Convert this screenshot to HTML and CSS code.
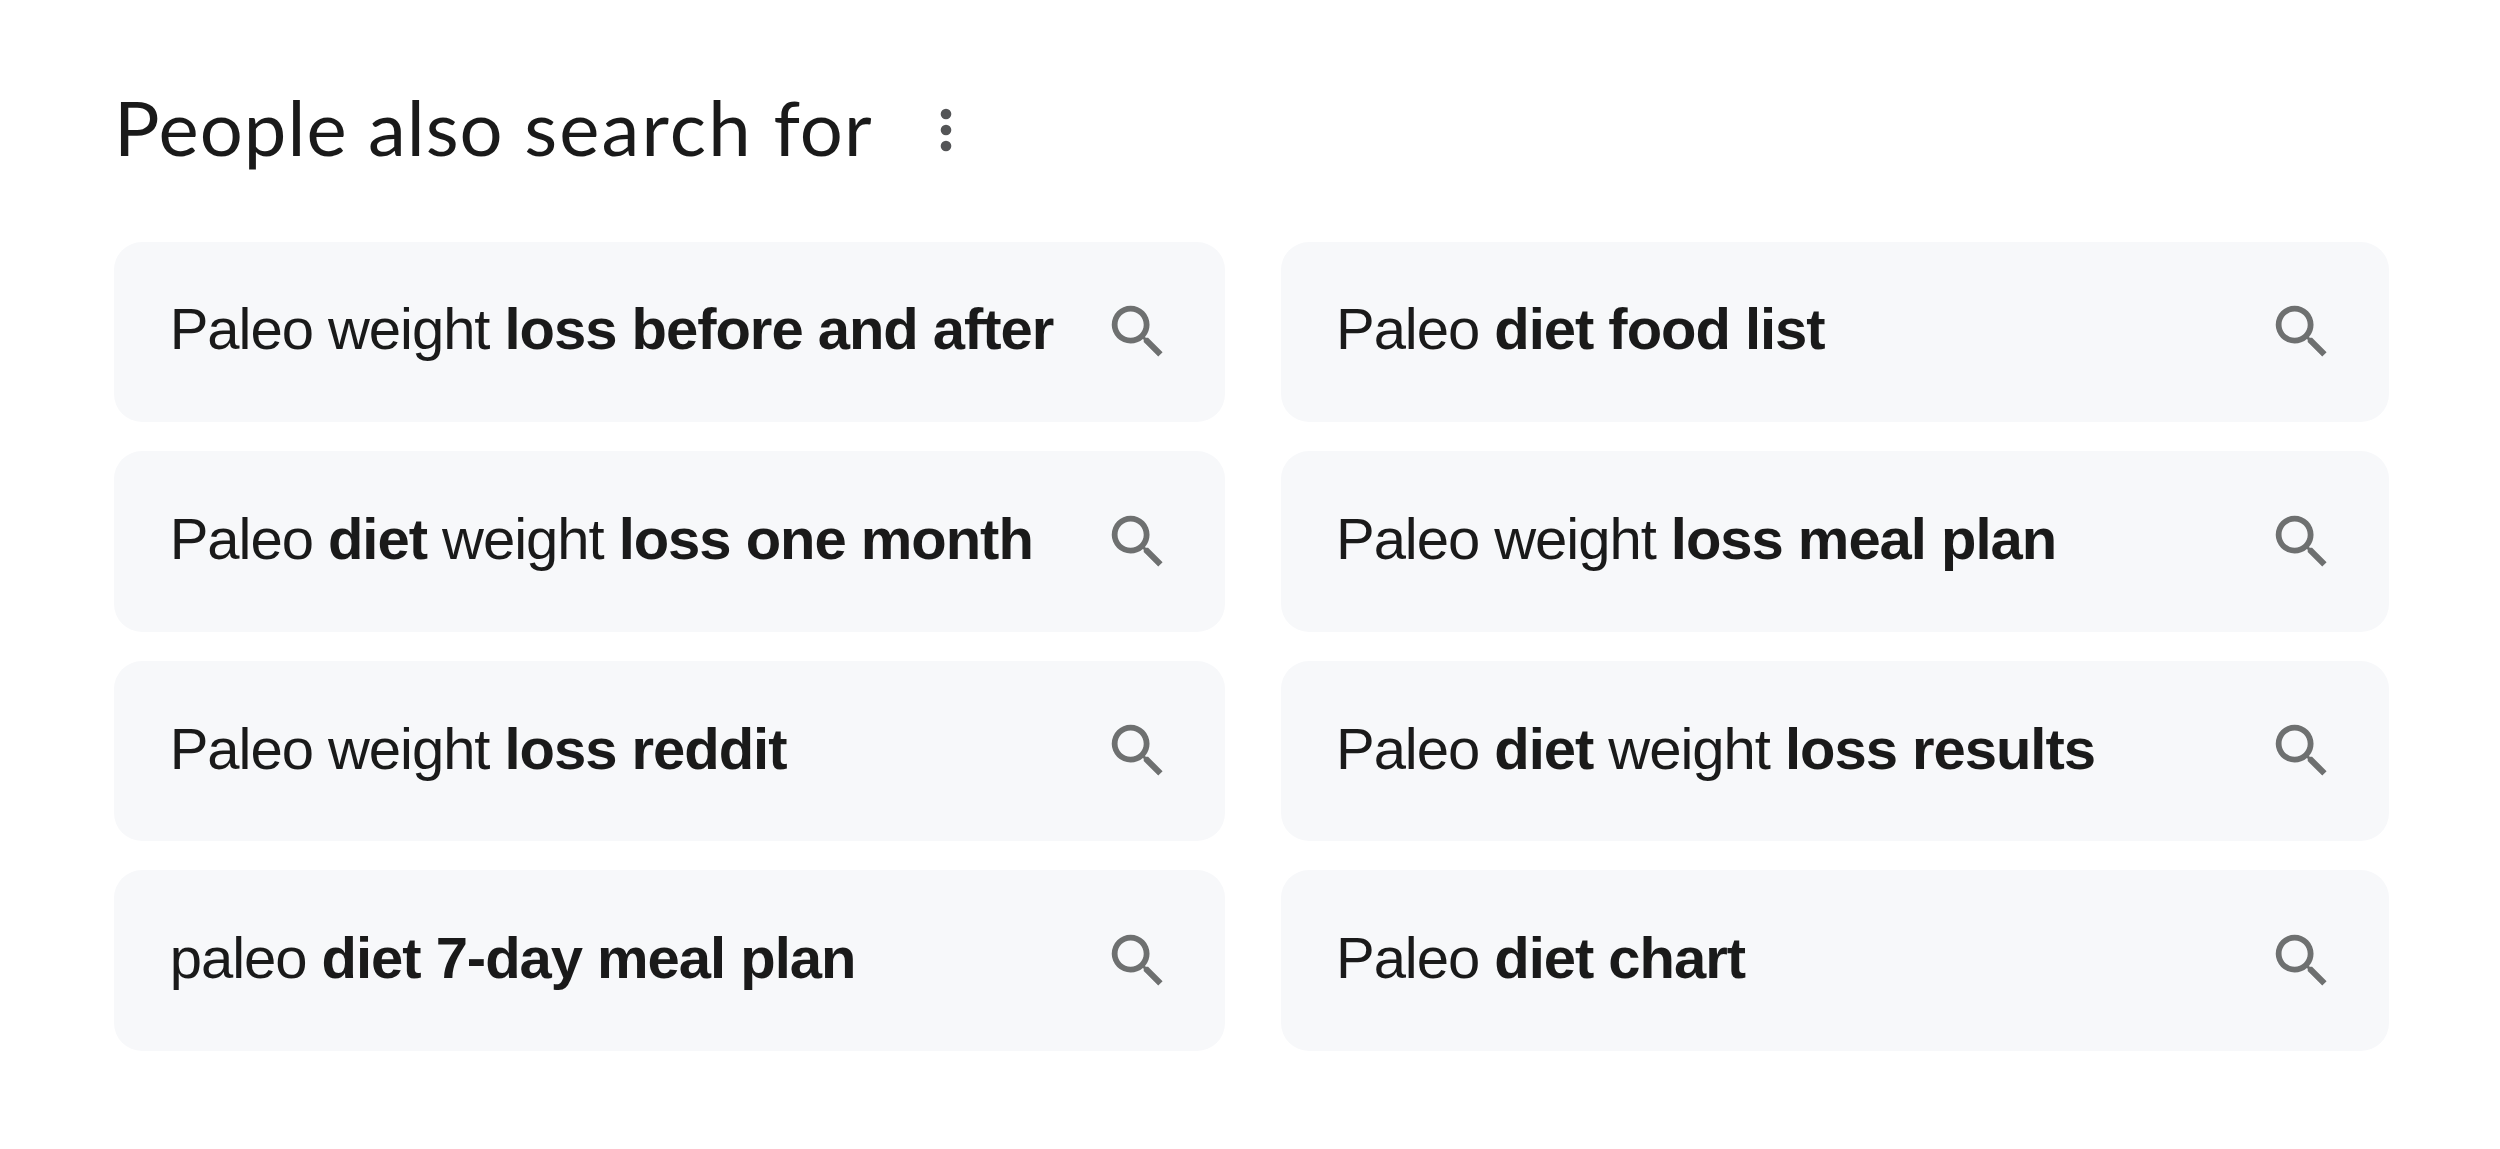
FILE: index.html
```html
<!DOCTYPE html>
<html lang="en">
<head>
<meta charset="utf-8">
<title>People also search for</title>
<link rel="stylesheet" href="styles.css">
</head>
<body>
<svg width="0" height="0" class="defs"><symbol id="search" viewBox="0 0 24 24"><path d="M15.5 14h-.79l-.28-.27A6.471 6.471 0 0 0 16 9.5 6.5 6.5 0 1 0 9.5 16c1.61 0 3.09-.59 4.23-1.57l.27.28v.79l5 4.99L20.49 19l-4.99-5zm-6 0C7.01 14 5 11.99 5 9.5S7.01 5 9.5 5 14 7.01 14 9.5 11.99 14 9.5 14z"/></symbol></svg>
<header class="heading">
<h1 class="title">People also <span class="wide">search</span> for</h1>
<svg class="more" viewBox="0 0 12 44"><circle cx="6" cy="6" r="5.3"/><circle cx="6" cy="22" r="5.3"/><circle cx="6" cy="38" r="5.3"/></svg>
</header>
<main class="grid">
<a class="card"><span class="label">Paleo weight <b>loss before and after</b></span><svg class="icon"><use href="#search"/></svg></a>
<a class="card"><span class="label">Paleo <b>diet food list</b></span><svg class="icon"><use href="#search"/></svg></a>
<a class="card"><span class="label">Paleo <b>diet</b> weight <b>loss one month</b></span><svg class="icon"><use href="#search"/></svg></a>
<a class="card"><span class="label">Paleo weight <b>loss meal plan</b></span><svg class="icon"><use href="#search"/></svg></a>
<a class="card"><span class="label">Paleo weight <b>loss reddit</b></span><svg class="icon"><use href="#search"/></svg></a>
<a class="card"><span class="label">Paleo <b>diet</b> weight <b>loss results</b></span><svg class="icon"><use href="#search"/></svg></a>
<a class="card"><span class="label">paleo <b>diet 7-day meal plan</b></span><svg class="icon"><use href="#search"/></svg></a>
<a class="card"><span class="label">Paleo <b>diet chart</b></span><svg class="icon"><use href="#search"/></svg></a>
</main>
</body>
</html>
```
FILE: styles.css
```css
body { margin: 0; background: #fff; color: #1a1a1a; font-family: "Liberation Sans", Arial, sans-serif; }
.defs { display: block; }
.heading { display: flex; align-items: center; height: 100px; padding: 80px 0 0 114px; }
.title { margin: 0; padding-bottom: 7px; width: 826px; font: 400 76px/92px Lato, sans-serif; letter-spacing: 1px; white-space: nowrap; }
.wide { letter-spacing: 2.2px; }
.more { width: 12px; height: 44px; fill: #545557; }
.grid { display: grid; grid-template-columns: 1110.5px 1108px; gap: 29.3px 55.8px; padding: 61.7px 0 0 114.4px; }
.card { display: flex; align-items: center; justify-content: space-between; box-sizing: border-box; height: 180.3px; padding: 0 52.4px 0 55.3px; border-radius: 28px; background: #f7f8fa; }
.label { padding-bottom: 5px; font-size: 58px; line-height: 70px; letter-spacing: -1.03px; white-space: nowrap; }
.icon { width: 69.8px; height: 69.8px; fill: #6e7070; }
```
